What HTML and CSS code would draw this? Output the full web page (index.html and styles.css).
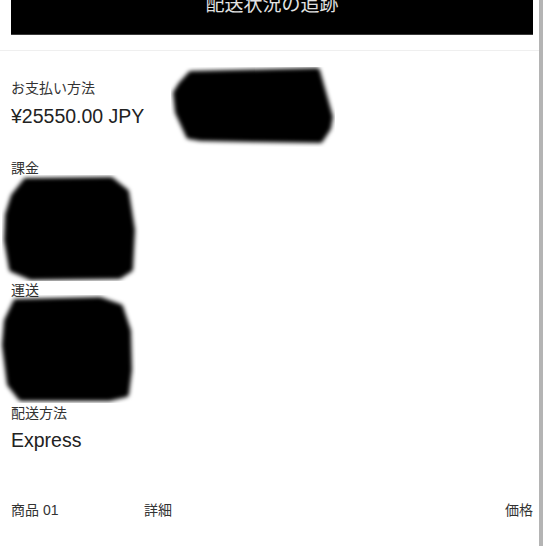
FILE: index.html
```html
<!DOCTYPE html>
<html lang="ja">
<head>
<meta charset="utf-8">
<link rel="stylesheet" href="styles.css">
</head>
<body>
<div class="page">
  <main class="main">
    <header class="header">
      <div class="track-btn">配送状況の追跡</div>
    </header>
    <section class="content">
      <div class="pay-row">
        <div class="pay-info">
          <div class="label">お支払い方法</div>
          <div class="value">¥25550.00 JPY</div>
        </div>
        <svg class="blob blob1" width="164" height="80" viewBox="0 0 164 80">
          <defs><filter id="b1" x="-10%" y="-15%" width="120%" height="130%"><feGaussianBlur stdDeviation="2.2"/></filter></defs>
          <path d="M20 7 L146 4 L159 50 L157 61 L149 73 L79 72 L30 71 L18 69 L7 45 L5 26 L10 18 Z" fill="#000" stroke="#000" stroke-width="6" stroke-linejoin="round" filter="url(#b1)"/>
        </svg>
      </div>
      <div class="label label-billing">課金</div>
      <svg class="blob blob2" width="138" height="106" viewBox="0 0 138 106">
        <defs><filter id="b2" x="-10%" y="-10%" width="120%" height="120%"><feGaussianBlur stdDeviation="2.2"/></filter></defs>
        <path d="M24 6 L109 5 L124 17 L130 55 L128 94 L117 101 L29 102 L10 94 L5 65 L6 40 L12 21 Z" fill="#000" stroke="#000" stroke-width="6" stroke-linejoin="round" filter="url(#b2)"/>
      </svg>
      <div class="label label-ship">運送</div>
      <svg class="blob blob3" width="136" height="108" viewBox="0 0 136 108">
        <defs><filter id="b3" x="-10%" y="-10%" width="120%" height="120%"><feGaussianBlur stdDeviation="2.2"/></filter></defs>
        <path d="M16 7 L100 5 L120 12 L128 36 L129 75 L126 99 L109 103 L21 103 L10 89 L5 50 L7 26 Z" fill="#000" stroke="#000" stroke-width="6" stroke-linejoin="round" filter="url(#b3)"/>
      </svg>
      <div class="label">配送方法</div>
      <div class="value value-express">Express</div>
      <div class="items-head">
        <span>商品 01</span>
        <span>詳細</span>
        <span>価格</span>
      </div>
    </section>
  </main>
  <div class="scrollbar"></div>
</div>
</body>
</html>
```

FILE: styles.css
```css
html, body {
  margin: 0;
  padding: 0;
  background: #fff;
  overflow: hidden;
}
body {
  font-family: "Liberation Sans", "Noto Sans CJK JP", sans-serif;
  color: #2a2a2a;
}
.page {
  display: flex;
  width: 546px;
  height: 546px;
}
.main {
  width: 539px;
  flex: none;
}
.scrollbar {
  width: 4px;
  background: #b4b4b4;
  flex: none;
}
.header {
  padding: 0 6px 15px 11px;
  border-bottom: 1px solid #efefef;
}
.track-btn {
  margin-top: -22px;
  height: 57px;
  box-sizing: border-box;
  padding-bottom: 7px;
  background: #000;
  border-bottom: 1px solid #3a3a3a;
  color: #e2e2e2;
  font-family: "Noto Sans CJK JP", sans-serif;
  font-size: 19px;
  display: flex;
  align-items: center;
  justify-content: center;
}
.content {
  padding: 16px 6px 0 11px;
}
.pay-row {
  display: flex;
  align-items: flex-start;
}
.pay-info {
  width: 160px;
  padding-top: 11px;
}
.blob {
  display: block;
}
.label {
  font-size: 14px;
  line-height: 20px;
  height: 20px;
  color: #333;
}
.value {
  font-size: 19.5px;
  line-height: 26px;
  color: #222;
  margin-top: 5px;
}
.label-billing {
  margin-top: 11px;
}
.blob2 {
  margin-top: -3px;
  margin-left: -9px;
}
.label-ship {
  margin-top: -1px;
}
.blob3 {
  margin-top: -5px;
  margin-left: -11px;
}
.value-express {
  margin-top: 4px;
}
.items-head {
  margin-top: 47px;
  display: grid;
  grid-template-columns: 133px 1fr auto;
  font-size: 14px;
  line-height: 20px;
  color: #333;
}
```
